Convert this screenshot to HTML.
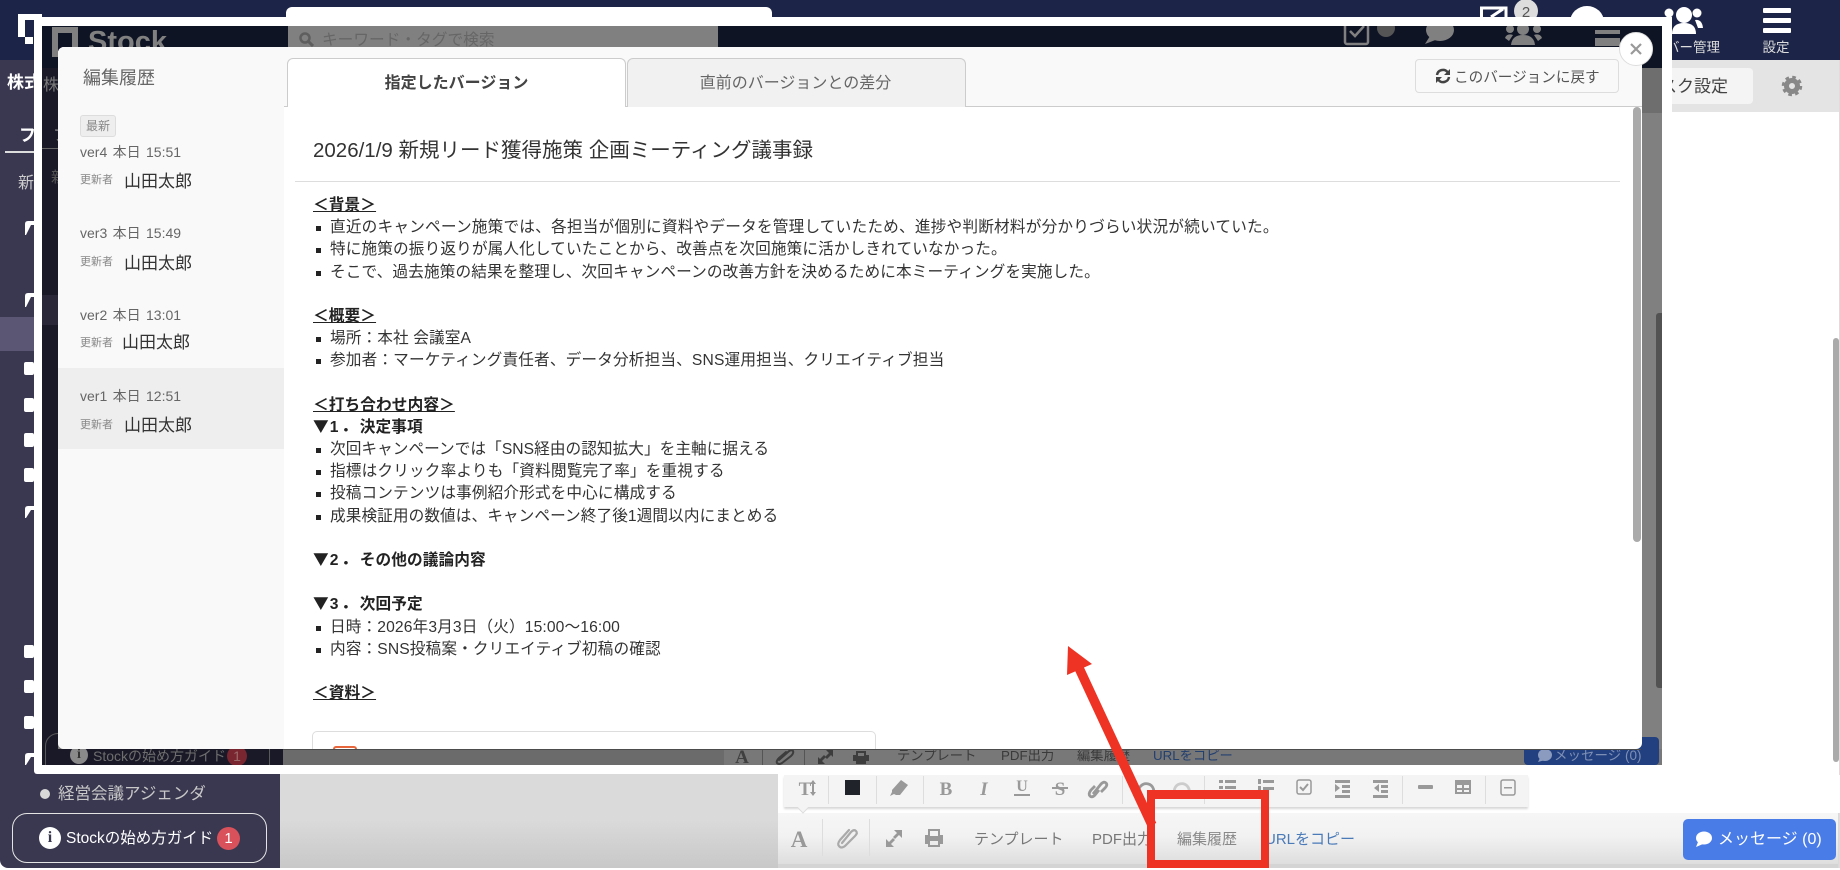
<!DOCTYPE html>
<html lang="ja">
<head>
<meta charset="utf-8">
<title>編集履歴</title>
<style>
*{box-sizing:border-box}
html,body{margin:0;padding:0;width:1840px;height:870px;overflow:hidden;background:#fff;font-family:"Liberation Sans","Noto Sans CJK JP",sans-serif}
.a{position:absolute}
.t{position:absolute;white-space:nowrap}
#body{position:absolute;left:255px;top:148px;width:1300px;font-size:15.65px;line-height:22.2px;color:#333;letter-spacing:.12px}
#body div{height:22.2px;white-space:nowrap}
#body .h{font-weight:700;color:#222;text-decoration:underline}
#body .b{font-weight:700;color:#222}
#body .b span{font-family:"Noto Sans CJK JP",sans-serif;font-weight:700;margin-right:1px;line-height:0}
#body .b b{letter-spacing:2.8px}
#body .l{padding-left:17px;position:relative}
#body .l:before{content:"";position:absolute;left:2.500px;top:9px;width:5px;height:5px;background:#222}
.v{position:absolute;left:22px;font-size:14px;line-height:20px;color:#666;word-spacing:1.5px;white-space:nowrap}
.u{position:absolute;left:22px;font-size:11px;line-height:16px;color:#888;white-space:nowrap}
.n{position:absolute;left:66px;font-size:17px;line-height:24px;color:#333;white-space:nowrap}
</style>
</head>
<body>

<!-- BASE LAYER -->
<div class="a" style="left:0;top:0;width:1840px;height:60px;background:#1c2548"></div>
<div class="a" style="left:0;top:60px;width:280px;height:808px;background:#3a3850;border-bottom-left-radius:8px"></div>
<div class="a" style="left:280px;top:60px;width:1560px;height:808px;background:#dadada"></div>
<div class="a" style="left:280px;top:820px;width:498px;height:48px;background:linear-gradient(#dadada,#c8c8c8)"></div>
<div class="a" style="left:1660px;top:60px;width:180px;height:52px;background:#e4e4e4"></div>
<div class="a" style="left:778px;top:112px;width:1062px;height:701px;background:#fff"></div>
<div class="a" style="left:1600px;top:68px;width:153px;height:36px;background:#f4f4f4;border-radius:4px"></div>
<div class="t" style="left:1660px;top:75px;font-size:17px;line-height:24px;color:#444">スク設定</div>
<div class="a" style="left:1833px;top:338px;width:6px;height:424px;background:#aaa;border-radius:3px"></div>
<div class="a" style="left:1839px;top:60px;width:1px;height:808px;background:#ddd"></div>

<!-- search -->
<div class="a" style="left:286px;top:7px;width:486px;height:30px;background:#fff;border-radius:6px"></div>

<!-- sidebar visible -->
<div class="t" style="left:7px;top:71px;font-size:17px;line-height:24px;font-weight:700;color:#fff">株式</div>
<div class="t" style="left:19px;top:124px;font-size:17px;line-height:24px;color:#fff;font-weight:700">フ</div>
<div class="a" style="left:5px;top:151px;width:30px;height:2px;background:#ddd"></div>
<div class="t" style="left:18px;top:172px;font-size:16px;line-height:24px;color:#ccc">新</div>
<div class="a" style="left:0;top:317px;width:36px;height:34px;background:#5a5674"></div>
<div class="t" style="left:58px;top:782px;font-size:16.5px;line-height:24px;color:#c8c8c8">経営会議アジェンダ</div>
<div class="a" style="left:40px;top:789px;width:10px;height:10px;border-radius:50%;background:#d8d8d8"></div>
<div class="a" style="left:12px;top:813px;width:255px;height:50px;border:1.5px solid #e4e4e4;border-radius:15px"></div>
<div class="a" style="left:39px;top:827px;width:22px;height:22px;border-radius:50%;background:#fff;color:#3a3850;font:700 16px/22px 'Liberation Serif',serif;text-align:center">i</div>
<div class="t" style="left:66px;top:828px;font-size:15.500px;line-height:22px;color:#fff">Stockの始め方ガイド</div>
<div class="a" style="left:217px;top:827px;width:23px;height:23px;border-radius:50%;background:#d9515a;color:#fff;font-size:15px;line-height:23px;text-align:center">1</div>

<!-- bottom bar -->
<div class="a" style="left:778px;top:775px;width:1062px;height:38px;background:#fff"></div>
<div class="a" style="left:778px;top:813px;width:1060px;height:51px;background:linear-gradient(#f6f6f6,#f2f2f2 45%,#dedede)"></div>
<div class="a" style="left:778px;top:864px;width:1060px;height:4px;background:#d4d4d4"></div>
<div class="a" style="left:784px;top:775px;width:744px;height:32px;background:#f4f4f4;box-shadow:0 2px 2px #d8d8d8"></div>
<div class="a" style="left:799px;top:804px;width:8px;height:8px;background:#f4f4f4;transform:rotate(45deg);border-right:1px solid #ddd;border-bottom:1px solid #ddd"></div>
<div class="t" style="left:974px;top:829px;font-size:15px;line-height:22px;color:#777">テンプレート</div>
<div class="t" style="left:1092px;top:829px;font-size:15px;line-height:22px;color:#777">PDF出力</div>
<div class="t" style="left:1177px;top:829px;font-size:15px;line-height:22px;color:#888">編集履歴</div>
<div class="t" style="left:1265px;top:829px;font-size:15px;line-height:22px;color:#4a7ab8">URLをコピー</div>
<div class="a" style="left:1683px;top:819px;width:153px;height:41px;background:#4a7ce8;border-radius:5px"></div>
<div class="t" style="left:1718px;top:828px;font-size:16px;line-height:24px;color:#fff">メッセージ (0)</div>

<!-- base icons -->
<svg class="a" style="left:0;top:0" width="1840" height="870" viewBox="0 0 1840 870">
  <!-- logo -->
  <path fill="#fff" d="M18 14H42V20H33V44H25V37H18ZM25 20V37H33V20Z" fill-rule="evenodd"/>
  <!-- header right -->
  <path fill="none" stroke="#fff" stroke-width="3" d="M1481.500 18V8H1506V18"/>
  <path fill="none" stroke="#fff" stroke-width="3" d="M1491 17L1503 9"/>
  <circle cx="1526" cy="11" r="12" fill="#ddd"/>
  <text x="1526" y="17" font-family="Liberation Sans" font-size="15" fill="#555" text-anchor="middle">2</text>
  <ellipse cx="1587" cy="22" rx="17" ry="16" fill="#fff"/>
  <circle cx="1684" cy="15" r="8" fill="#fff"/><circle cx="1669" cy="13" r="4.500" fill="#fff"/><circle cx="1697" cy="13" r="4.500" fill="#fff"/>
  <path fill="#fff" d="M1672 34Q1672 23 1684 23Q1696 23 1696 34Z"/>
  <path fill="#fff" d="M1664 28Q1665 19 1672 20L1670 28ZM1703 28Q1702 19 1695 20L1698 28Z"/>
  <rect x="1763" y="8" width="28" height="5" rx="1" fill="#fff"/><rect x="1763" y="18" width="28" height="5" rx="1" fill="#fff"/><rect x="1763" y="28" width="28" height="5" rx="1" fill="#fff"/>
  <text x="1720" y="52" font-family="Liberation Sans,Noto Sans CJK JP" font-size="13.500" fill="#ddd" text-anchor="end">バー管理</text>
  <text x="1776" y="52" font-family="Liberation Sans,Noto Sans CJK JP" font-size="13.500" fill="#ddd" text-anchor="middle">設定</text>
  <!-- gear -->
  <circle cx="1792" cy="86" r="5.500" fill="none" stroke="#888" stroke-width="5"/>
  <circle cx="1792" cy="86" r="8.500" fill="none" stroke="#888" stroke-width="3.500" stroke-dasharray="3.500 3.170"/>
  <!-- sidebar icons strip -->
  <g fill="#fff">
    <rect x="24" y="362" width="10" height="13" rx="2"/><rect x="24" y="398" width="10" height="14" rx="2"/><rect x="24" y="433" width="10" height="14" rx="2"/><rect x="24" y="468" width="10" height="14" rx="2"/>
    <rect x="24" y="645" width="10" height="13" rx="2"/><rect x="24" y="680" width="10" height="13" rx="2"/><rect x="24" y="716" width="10" height="13" rx="2"/>
    <path d="M25 235V224Q25 221 28 221H34V225H31L26 235Z"/><path d="M25 307V296Q25 293 28 293H34V297H31L26 307Z"/><path d="M25 518V509Q25 506 28 506H34V510H31L26 518Z"/><path d="M25 765V756Q25 753 28 753H34V757H31L26 765Z"/>
  </g>
  <!-- bottom bar icons -->
  <g fill="#999" font-weight="700">
    <text x="799" y="847" font-family="Liberation Serif" font-size="23" text-anchor="middle">A</text>
    <path fill="none" stroke="#aaa" stroke-width="2.200" stroke-linecap="round" d="M842 843L851 832Q854 829 856 831Q858 833 855 836L845 846Q841 849 839 846Q837 844 840 840L849 830"/>
    <path d="M886 839v8h8l-3-3 4-4-2-2-4 4ZM902 830h-8l3 3-4 4 2 2 4-4 3 3Z"/>
    <path fill-rule="evenodd" d="M928 829H940V835H943V844H940V847H928V844H925V835H928ZM930 831V836H938V831ZM930 841V845H938V841Z"/>
    <rect x="822" y="819" width="1" height="37" fill="#ddd"/><rect x="869" y="819" width="1" height="37" fill="#ddd"/>
  </g>
  <g fill="#999" font-weight="700" font-family="Liberation Serif">
    <text x="805" y="795" font-size="19" text-anchor="middle">T</text>
    <path d="M813 780l-3 4h2v8h-2l3 4 3-4h-2v-8h2Z"/>
    <rect x="828" y="776" width="1" height="28" fill="#ddd"/>
    <rect x="845" y="780" width="15" height="15" fill="#21232b"/>
    <rect x="876" y="776" width="1" height="28" fill="#ddd"/>
    <path d="M901 780L908 785L900 795H896L894 794L890 796L892 792V790Z"/>
    <rect x="923" y="776" width="1" height="28" fill="#ddd"/>
    <text x="946" y="795" font-size="19" text-anchor="middle">B</text>
    <text x="984" y="795" font-size="19" text-anchor="middle" font-style="italic">I</text>
    <text x="1022" y="791" font-size="16" text-anchor="middle">U</text>
    <rect x="1014" y="794" width="16" height="2"/>
    <text x="1060" y="795" font-size="19" text-anchor="middle">S</text>
    <rect x="1052" y="787" width="16" height="2"/>
    <path fill="none" stroke="#999" stroke-width="2.800" d="M1093 793l8-10q3-3 5-1t-1 5l-4 4M1099 789l-4 5q-3 3-5 1t1-6l4-4" transform="translate(0 1)"/>
    <rect x="1122" y="776" width="1" height="28" fill="#ddd"/>
    <path fill="none" stroke="#999" stroke-width="2.800" d="M1139 793a7.500 7.500 0 1 1 13 3"/>
    <path fill="none" stroke="#ccc" stroke-width="2.800" d="M1189 793a7.500 7.500 0 1 0 -13 3"/>
    <rect x="1204" y="776" width="1" height="28" fill="#ddd"/>
    <path d="M1219 780h4v3h-4zM1225 780h11v3h-11zM1219 786h4v3h-4zM1225 786h11v3h-11z"/>
    <path d="M1258 779h3v5h-3zM1258 786h3v5h-3zM1263 780h11v3h-11zM1263 787h11v3h-11z"/>
    <rect x="1297" y="780" width="14" height="14" rx="2" fill="none" stroke="#999" stroke-width="1.500"/>
    <path fill="none" stroke="#999" stroke-width="2" d="M1300 787l3 3 5-6"/>
    <path d="M1335 780h15v3h-15zM1342 785h8v3h-8zM1342 790h8v3h-8zM1335 795h15v3h-15zM1335 784l5 4-5 4z"/>
    <path d="M1373 780h15v3h-15zM1381 785h7v3h-7zM1381 790h7v3h-7zM1373 795h15v3h-15zM1379 784l-5 4 5 4z"/>
    <rect x="1402" y="776" width="1" height="28" fill="#ddd"/>
    <rect x="1418" y="785" width="15" height="4" rx="1"/>
    <path fill-rule="evenodd" d="M1455 780h16v14h-16zM1457 785v3h5v-3zM1464 785v3h5v-3zM1457 790v2h5v-2zM1464 790v2h5v-2z"/>
    <rect x="1485" y="776" width="1" height="28" fill="#ddd"/>
    <rect x="1501" y="780" width="14" height="15" rx="2" fill="none" stroke="#999" stroke-width="1.500"/>
    <rect x="1504" y="787" width="8" height="1.500"/>
  </g>
  <!-- message bubble -->
  <ellipse cx="1704" cy="838" rx="8" ry="6.500" fill="#fff"/><path d="M1698 842L1696 847L1703 844Z" fill="#fff"/>
</svg>

<!-- FRAME (embedded screenshot) -->
<div class="a" style="left:34px;top:17px;width:1638px;height:757px;background:#fff;border-radius:0 0 0 3px"></div>
<div class="a" style="left:1662px;top:112px;width:10px;height:662px;background:#fff"></div>
<div class="a" id="inner" style="left:42px;top:26px;width:1620px;height:739px;background:#808080;overflow:hidden">
  <div class="a" style="left:0;top:0;width:1620px;height:42px;background:#0e1424"></div>
  <div class="a" style="left:0;top:42px;width:16px;height:697px;background:#1a1928"></div>
  <div class="a" style="left:0;top:269px;width:16px;height:30px;background:#2a2838"></div>
  <div class="a" style="left:241px;top:723px;width:1379px;height:16px;background:#787878"></div>
  <div class="a" style="left:241px;top:723px;width:441px;height:16px;background:#6b6b6b"></div>
  <div class="a" style="left:0;top:723px;width:241px;height:16px;background:#1a1928"></div>
  <div class="a" style="left:1599px;top:42px;width:21px;height:45px;background:#6e6e6e"></div>
  <div class="a" style="left:1614px;top:287px;width:6px;height:375px;background:#525252;border-radius:3px 0 0 3px"></div>
  <!-- logo -->
  <div class="a" style="left:10px;top:1px;width:26px;height:30px;border:6px solid #808080"></div>
  <div class="t" style="left:46px;top:-4px;font-size:29px;line-height:40px;font-weight:700;color:#808080">Stock</div>
  <!-- search -->
  <div class="a" style="left:246px;top:0;width:430px;height:24px;background:#808080"></div>
  <svg class="a" style="left:256px;top:5px" width="16" height="16"><circle cx="7" cy="7" r="4.500" fill="none" stroke="#5e5e5e" stroke-width="2.500"/><path d="M10 10l5 5" stroke="#5e5e5e" stroke-width="3"/></svg>
  <div class="t" style="left:280px;top:3px;font-size:15.700px;line-height:24px;color:#666">キーワード・タグで検索</div>
  <!-- header icons -->
  <svg class="a" style="left:1290px;top:0" width="330" height="22">
    <rect x="13" y="-6" width="23" height="24" rx="2" fill="none" stroke="#808080" stroke-width="2.500"/>
    <path d="M18 5l5 5 9-10" fill="none" stroke="#808080" stroke-width="2.500"/>
    <circle cx="54" cy="2" r="9" fill="#555"/>
    <ellipse cx="108" cy="4" rx="14" ry="11" fill="#808080"/><path d="M98 10L93 18L106 13Z" fill="#808080"/>
    <circle cx="191" cy="3" r="6" fill="#808080"/><circle cx="178" cy="3" r="4" fill="#808080"/><circle cx="205" cy="3" r="4" fill="#808080"/>
    <path d="M179 19Q180 9 191 9Q202 9 203 19ZM173 12Q175 7 181 9L177 15ZM210 12Q208 7 202 9L206 15Z" fill="#808080"/>
    <rect x="263" y="4" width="25" height="4" fill="#808080"/><rect x="263" y="12" width="25" height="4" fill="#808080"/>
  </svg>
  <div class="a" style="left:1553px;top:16px;width:25px;height:4px;background:#808080"></div>
  <div class="t" style="left:1px;top:48px;font-size:16px;line-height:24px;color:#7a7a7a">株</div>
  <div class="t" style="left:11px;top:98px;font-size:15px;line-height:24px;color:#888">フ</div>
  <div class="a" style="left:0;top:122px;width:16px;height:1px;background:#666"></div>
  <div class="t" style="left:9px;top:140px;font-size:15px;line-height:24px;color:#555">新</div>
  <!-- guide button -->
  <div class="a" style="left:3px;top:707px;width:225px;height:60px;border:1px solid #5a5a5a;border-radius:13px"></div>
  <div class="a" style="left:28px;top:720px;width:18px;height:18px;border-radius:50%;background:#8a8a8a;color:#333;font:700 14px/18px 'Liberation Serif',serif;text-align:center">i</div>
  <div class="t" style="left:51px;top:720px;font-size:14px;line-height:20px;color:#6e6e6e">Stockの始め方ガイド</div>
  <div class="a" style="left:185px;top:720px;width:20px;height:20px;border-radius:50%;background:#7a2630;color:#9a6a6a;font-size:14px;line-height:20px;text-align:center">1</div>
  <!-- inner bottom toolbar -->
  <svg class="a" style="left:680px;top:723px" width="220" height="16" viewBox="42 0 220 16" preserveAspectRatio="xMinYMin">
    <g transform="translate(42 0)">
    <text x="20" y="14" font-family="Liberation Serif" font-weight="700" font-size="19" fill="#404040" text-anchor="middle">A</text>
    <rect x="40" y="0" width="1" height="16" fill="#555"/><rect x="82" y="0" width="1" height="16" fill="#555"/>
    <path fill="none" stroke="#3d3d3d" stroke-width="2" stroke-linecap="round" d="M57 11L66 3Q69 0 71 2Q72 4 69 7L60 14Q57 16 55 14Q54 12 57 9L64 3"/>
    <path fill="#3d3d3d" d="M96 8v7h7l-3-3 4-4-2-2-4 4ZM111 1h-7l3 3-4 4 2 2 4-4 2 2Z"/>
    <path fill="#3d3d3d" fill-rule="evenodd" d="M134 2H144V6H147V12H144V15H134V12H131V6H134ZM136 4V7H142V4Z"/>
    </g>
  </svg>
  <div class="t" style="left:855px;top:720px;font-size:13.300px;line-height:20px;color:#3a3a3a">テンプレート</div>
  <div class="t" style="left:959px;top:720px;font-size:13.300px;line-height:20px;color:#3a3a3a">PDF出力</div>
  <div class="t" style="left:1035px;top:720px;font-size:13.300px;line-height:20px;color:#3a3a3a">編集履歴</div>
  <div class="t" style="left:1111px;top:720px;font-size:13.300px;line-height:20px;color:#24406f">URLをコピー</div>
  <div class="a" style="left:1482px;top:711px;width:135px;height:28px;background:#22407f;border-radius:4px"></div>
  <svg class="a" style="left:1494px;top:722px" width="18" height="15"><ellipse cx="9" cy="7" rx="7" ry="6" fill="#8b9bbf"/><path d="M4 10L2 14L9 12Z" fill="#8b9bbf"/></svg>
  <div class="t" style="left:1512px;top:720px;font-size:13.500px;line-height:20px;color:#7d8fb5">メッセージ (0)</div>
  <div class="a" style="left:241px;top:723px;width:1358px;height:1px;background:#4c4c4c"></div>
</div>

<!-- MODAL -->
<div class="a" id="modal" style="left:58px;top:47px;width:1584px;height:702px;background:#fff;border-radius:6px 0 6px 6px;overflow:hidden">
  <div class="a" style="left:0;top:0;width:1584px;height:60px;background:#f9f9f9"></div>
  <div class="a" style="left:0;top:0;width:226px;height:702px;background:#f9f9f9"></div>
  <div class="a" style="left:226px;top:59px;width:1358px;height:1px;background:#ccc"></div>
  <!-- tabs -->
  <div class="a" style="left:229px;top:11px;width:339px;height:49px;background:#fff;border:1px solid #ccc;border-bottom:0;border-radius:6px 6px 0 0"></div>
  <div class="t" style="left:229px;top:25px;width:339px;text-align:center;font-size:16px;font-weight:700;line-height:24px;color:#444">指定したバージョン</div>
  <div class="a" style="left:569px;top:11px;width:339px;height:49px;background:#f1f1f1;border:1px solid #ccc;border-bottom:0;border-radius:6px 6px 0 0"></div>
  <div class="t" style="left:568px;top:25px;width:339px;text-align:center;font-size:16px;line-height:24px;color:#666">直前のバージョンとの差分</div>
  <!-- left -->
  <div class="t" style="left:25px;top:18px;font-size:18px;line-height:26px;color:#666">編集履歴</div>
  <div class="a" style="left:22px;top:68px;width:36px;height:22px;background:#eee;border:1px solid #ddd;border-radius:3px;font-size:12px;line-height:20px;text-align:center;color:#888">最新</div>

  <div class="v" style="top:95px">ver4 本日 15:51</div>
  <div class="u" style="top:125px">更新者</div>
  <div class="n" style="top:123px">山田太郎</div>

  <div class="v" style="top:176px">ver3 本日 15:49</div>
  <div class="u" style="top:207px">更新者</div>
  <div class="n" style="top:205px">山田太郎</div>

  <div class="a" style="left:0;top:321px;width:226px;height:81px;background:#eee"></div>
  <div class="v" style="top:258px">ver2 本日 13:01</div>
  <div class="u" style="top:288px">更新者</div>
  <div class="n" style="top:284px;left:64px">山田太郎</div>

  <div class="v" style="top:339px">ver1 本日 12:51</div>
  <div class="u" style="top:370px">更新者</div>
  <div class="n" style="top:367px">山田太郎</div>

  <!-- content -->
  <div class="t" style="left:255px;top:90px;font-size:20.500px;line-height:28px;color:#333">2026/1/9 新規リード獲得施策 企画ミーティング議事録</div>
  <div class="a" style="left:237px;top:134px;width:1325px;height:1px;background:#ddd"></div>
  <div id="body">
    <div class="h">＜背景＞</div>
    <div class="l" style="letter-spacing:.2px">直近のキャンペーン施策では、各担当が個別に資料やデータを管理していたため、進捗や判断材料が分かりづらい状況が続いていた。</div>
    <div class="l">特に施策の振り返りが属人化していたことから、改善点を次回施策に活かしきれていなかった。</div>
    <div class="l">そこで、過去施策の結果を整理し、次回キャンペーンの改善方針を決めるために本ミーティングを実施した。</div>
    <div></div>
    <div class="h">＜概要＞</div>
    <div class="l">場所：本社 会議室A</div>
    <div class="l" style="letter-spacing:.15px">参加者：マーケティング責任者、データ分析担当、SNS運用担当、クリエイティブ担当</div>
    <div></div>
    <div class="h">＜打ち合わせ内容＞</div>
    <div class="b"><span>▼</span><b>1．</b>決定事項</div>
    <div class="l" style="letter-spacing:.05px">次回キャンペーンでは「SNS経由の認知拡大」を主軸に据える</div>
    <div class="l" style="letter-spacing:.16px">指標はクリック率よりも「資料閲覧完了率」を重視する</div>
    <div class="l">投稿コンテンツは事例紹介形式を中心に構成する</div>
    <div class="l" style="letter-spacing:.08px">成果検証用の数値は、キャンペーン終了後1週間以内にまとめる</div>
    <div></div>
    <div class="b"><span>▼</span><b>2．</b>その他の議論内容</div>
    <div></div>
    <div class="b"><span>▼</span><b>3．</b>次回予定</div>
    <div class="l">日時：2026年3月3日（火）15:00〜16:00</div>
    <div class="l">内容：SNS投稿案・クリエイティブ初稿の確認</div>
    <div></div>
    <div class="h">＜資料＞</div>
  </div>
  <div class="a" style="left:254px;top:684px;width:564px;height:60px;border:1px solid #ddd;border-radius:5px"></div>
  <div class="a" style="left:275px;top:699px;width:24px;height:30px;border:2px solid #e8663c;border-radius:3px"></div>
  <!-- return button -->
  <div class="a" style="left:1357px;top:12px;width:204px;height:34px;background:#f9f9f9;border:1px solid #ddd;border-radius:4px"></div>
  <svg class="a" style="left:1377px;top:21px" width="16" height="16" viewBox="0 0 16 16"><path fill="none" stroke="#444" stroke-width="2.500" d="M2 7a6 6 0 0 1 10.500-3M14 9a6 6 0 0 1-10.500 3"/><path fill="#444" d="M15 1v6h-6zM1 15V9h6z"/></svg>
  <div class="t" style="left:1396px;top:20px;font-size:14.600px;line-height:22px;color:#555">このバージョンに戻す</div>
  <!-- scrollbar -->
  <div class="a" style="left:1575px;top:60px;width:8px;height:435px;background:#aaa;border-radius:4px"></div>
</div>

<!-- close -->
<div class="a" style="left:1619px;top:32px;width:34px;height:34px;border-radius:50%;background:#fff;border:1px solid #ddd"></div>
<svg class="a" style="left:1629px;top:42px" width="14" height="14"><path d="M2 2L12 12M12 2L2 12" stroke="#999" stroke-width="2.200"/></svg>

<!-- RED ANNOTATIONS -->
<svg class="a" style="left:0;top:0" width="1840" height="870" viewBox="0 0 1840 870">
  <path d="M1079 668L1152 825" stroke="#ee3324" stroke-width="9.500" fill="none"/>
  <path d="M1068 646L1092 664L1067 675Z" fill="#ee3324"/>
  <path fill="#ee3324" fill-rule="evenodd" d="M1147 790H1269V868H1147ZM1155 799V860H1261V799Z"/>
</svg>

</body>
</html>
